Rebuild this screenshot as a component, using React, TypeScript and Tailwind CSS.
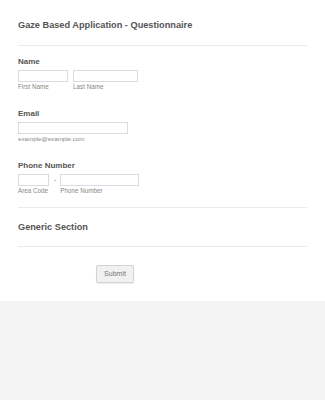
import React from 'react'

function Field({ w }: { w: string }) {
  return <div className={`h-[12px] border border-[#d8dbe0] bg-white ${w}`} />
}

export default function App() {
  return (
    <div className="min-h-screen w-full bg-[#f3f3f3] font-['Liberation_Sans',Arial,sans-serif]">
      <div className="h-[301px] bg-white px-[18px]">
        {/* title */}
        <div className="pt-[19px] pb-[14px] border-b border-[#ebebeb]">
          <h1 className="text-[9.2px] leading-[12px] font-bold text-[#555]">
            Gaze Based Application - Questionnaire
          </h1>
        </div>

        {/* name */}
        <div className="pt-[11px]">
          <div className="text-[8px] leading-[10px] font-bold text-[#555]">Name</div>
          <div className="mt-[3px] flex gap-[5px]">
            <div className="flex flex-col">
              <Field w="w-[50px]" />
              <span className="mt-[1px] text-[6.3px] leading-[8px] text-[#888]">First Name</span>
            </div>
            <div className="flex flex-col">
              <Field w="w-[65px]" />
              <span className="mt-[1px] text-[6.3px] leading-[8px] text-[#888]">Last Name</span>
            </div>
          </div>
        </div>

        {/* email */}
        <div className="pt-[18px]">
          <div className="text-[8px] leading-[10px] font-bold text-[#555]">Email</div>
          <div className="mt-[3px] flex flex-col">
            <Field w="w-[110px]" />
            <span className="mt-[1px] text-[6.2px] leading-[8px] text-[#888]">example@example.com</span>
          </div>
        </div>

        {/* phone */}
        <div className="pt-[18px] pb-[12px] border-b border-[#ebebeb]">
          <div className="text-[8px] leading-[10px] font-bold text-[#555]">Phone Number</div>
          <div className="mt-[3px] flex items-start">
            <div className="flex flex-col">
              <Field w="w-[31px]" />
              <span className="mt-[1px] text-[6.3px] leading-[8px] text-[#888]">Area Code</span>
            </div>
            <span className="ml-[5px] mr-[4px] text-[7px] leading-[12px] text-[#888]">-</span>
            <div className="flex flex-col">
              <Field w="w-[79px]" />
              <span className="mt-[1px] text-[6.3px] leading-[8px] text-[#888]">Phone Number</span>
            </div>
          </div>
        </div>

        {/* section */}
        <div className="pt-[13px] pb-[13px] border-b border-[#ebebeb]">
          <h2 className="text-[9.2px] leading-[12px] font-bold text-[#555]">Generic Section</h2>
        </div>

        <div className="flex pt-[18px] pl-[78px]">
          <button className="h-[18px] w-[38px] rounded-[2px] border border-[#d3d3d3] bg-[#f1f1f1] text-[7px] leading-[16px] text-[#777] shadow-[0_1px_1px_rgba(0,0,0,0.08)]">
            Submit
          </button>
        </div>
      </div>
    </div>
  )
}
